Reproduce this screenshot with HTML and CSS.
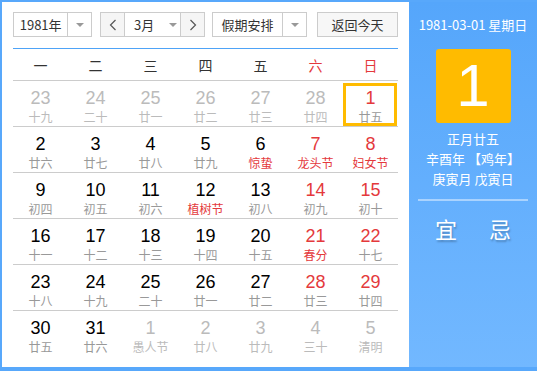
FILE: index.html
```html
<!DOCTYPE html>
<html>
  <head>
    <title>万年历</title>
    <meta charset="UTF-8" />
    <link rel="stylesheet" href="styles.css">
  </head>
  <body>
    <div class="calendar">
      <div class="main">
        <div class="toolbar">
          <div class="select year">
            <span class="sel-text">1981年</span>
            <span class="sel-arrow"><i class="tri"></i></span>
          </div>
          <div class="select month">
            <span class="nav">
              <svg width="8" height="12" viewBox="0 0 8 12"><polyline points="6.5,1 1.5,6 6.5,11" fill="none" stroke="#555" stroke-width="1.2"/></svg>
            </span>
            <span class="sel-text">3月<i class="tri"></i></span>
            <span class="nav">
              <svg width="8" height="12" viewBox="0 0 8 12"><polyline points="1.5,1 6.5,6 1.5,11" fill="none" stroke="#555" stroke-width="1.2"/></svg>
            </span>
          </div>
          <div class="select holiday">
            <span class="sel-text">假期安排</span>
            <span class="sel-arrow"><i class="tri"></i></span>
          </div>
          <button class="today-btn">返回今天</button>
        </div>

        <div class="weekhead">
          <span>一</span><span>二</span><span>三</span><span>四</span><span>五</span>
          <span class="red">六</span><span class="red">日</span>
        </div>

        <div class="days" id="days"></div>
      </div>

      <div class="side">
        <div class="side-date">1981-03-01 星期日</div>
        <div class="big-day">1</div>
        <div class="lunar-info">
          <p>正月廿五</p>
          <p>辛酉年 【鸡年】</p>
          <p>庚寅月 戊寅日</p>
        </div>
        <div class="side-line"></div>
        <div class="yiji"><span>宜</span><span>忌</span></div>
      </div>
    </div>

    <script>
      // [day, lunar, flags]  o = other month, r = red number, f = festival text, t = today
      const weeks = [
        [["23","十九","o"],["24","二十","o"],["25","廿一","o"],["26","廿二","o"],["27","廿三","o"],["28","廿四","o"],["1","廿五","rt"]],
        [["2","廿六"],["3","廿七"],["4","廿八"],["5","廿九"],["6","惊蛰","f"],["7","龙头节","rf"],["8","妇女节","rf"]],
        [["9","初四"],["10","初五"],["11","初六"],["12","植树节","f"],["13","初八"],["14","初九","r"],["15","初十","r"]],
        [["16","十一"],["17","十二"],["18","十三"],["19","十四"],["20","十五"],["21","春分","rf"],["22","十七","r"]],
        [["23","十八"],["24","十九"],["25","二十"],["26","廿一"],["27","廿二"],["28","廿三","r"],["29","廿四","r"]],
        [["30","廿五"],["31","廿六"],["1","愚人节","o"],["2","廿八","o"],["3","廿九","o"],["4","三十","o"],["5","清明","o"]],
      ];

      const days = document.getElementById("days");
      days.innerHTML = weeks
        .map((w) => {
          const cells = w
            .map(([d, l, f = ""]) => {
              let cls = "day";
              if (f.includes("o")) cls += " other";
              if (f.includes("r")) cls += " weekend";
              if (f.includes("f")) cls += " fest";
              if (f.includes("t")) cls += " today";
              return `<div class="${cls}"><span class="num">${d}</span><span class="lunar">${l}</span></div>`;
            })
            .join("");
          return `<div class="week">${cells}</div>`;
        })
        .join("");
    </script>
  </body>
</html>
```

FILE: styles.css
```css
body {
  margin: 0;
  font-family: "Noto Sans CJK SC", "Liberation Sans", sans-serif;
}
.calendar {
  display: flex;
  width: 537px;
  height: 371px;
  box-sizing: border-box;
  padding: 2px 0 4px 2px;
  background: #58a8fb;
}
.main {
  width: 407px;
  background: #fff;
  padding: 10px 11px 0;
  box-sizing: border-box;
}

/* toolbar */
.toolbar {
  display: flex;
  height: 25px;
  font-size: 13px;
  color: #333;
}
.select {
  display: flex;
  border: 1px solid #ccc;
  box-sizing: border-box;
  height: 25px;
  background: #fff;
  white-space: nowrap;
}
.select .sel-text {
  display: flex;
  align-items: center;
  justify-content: center;
}
.sel-arrow {
  width: 23px;
  border-left: 1px solid #ccc;
  display: flex;
  align-items: center;
  justify-content: center;
}
.tri {
  width: 0;
  height: 0;
  border-left: 4px solid transparent;
  border-right: 4px solid transparent;
  border-top: 4px solid #999;
}
.year {
  width: 79px;
}
.year .sel-text {
  width: 54px;
}
.month {
  width: 105px;
  margin-left: 8px;
}
.month .nav {
  width: 23px;
  flex-shrink: 0;
  background: #f5f5f5;
  display: flex;
  align-items: center;
  justify-content: center;
}
.month .nav:first-child {
  border-right: 1px solid #ccc;
}
.month .nav:last-child {
  border-left: 1px solid #ccc;
}
.month .sel-text {
  flex: 1;
  justify-content: flex-start;
  padding-left: 9px;
}
.month .sel-text .tri {
  margin-left: 15px;
}
.holiday {
  width: 95px;
  margin-left: 7px;
}
.holiday .sel-text {
  width: 70px;
}
.today-btn {
  margin-left: 10px;
  width: 81px;
  height: 25px;
  border: 1px solid #ccc;
  background: #f7f7f7;
  font-family: inherit;
  font-size: 13px;
  color: #333;
  padding: 0;
}

/* calendar grid */
.weekhead,
.week {
  display: grid;
  grid-template-columns: repeat(7, 55px);
}
.weekhead {
  margin-top: 11px;
  border-top: 1px solid #4ea3f7;
  border-bottom: 1px solid #ccc;
  height: 33px;
  box-sizing: border-box;
  font-size: 14px;
  color: #333;
}
.weekhead span {
  display: flex;
  align-items: center;
  justify-content: center;
}
.red {
  color: #e4393c;
}
.week {
  height: 46px;
  box-sizing: border-box;
  border-bottom: 1px solid #ccc;
}
.week:last-child {
  border-bottom: none;
}
.day {
  position: relative;
  display: flex;
  flex-direction: column;
  align-items: center;
  padding-top: 6px;
}
.num {
  font-family: "Liberation Sans", sans-serif;
  font-size: 18px;
  line-height: 22px;
  color: #000;
}
.lunar {
  font-size: 12px;
  line-height: 16px;
  color: #999;
}
.weekend .num {
  color: #e4393c;
}
.fest .lunar {
  color: #e4393c;
}
.other .num {
  color: #bbb;
}
.other .lunar {
  color: #bbb;
}
.today::after {
  content: "";
  position: absolute;
  top: 2px;
  left: 0;
  right: 1px;
  bottom: 0;
  border: 3px solid #ffbb00;
}

/* right panel */
.side {
  flex: 1;
  background: linear-gradient(#55a6fb, #72b8ff);
  color: #fff;
  text-align: center;
  display: flex;
  flex-direction: column;
  align-items: center;
}
.side-date {
  margin-top: 15px;
  font-size: 13px;
  line-height: 16px;
}
.big-day {
  margin-top: 16px;
  width: 75px;
  height: 74px;
  border-radius: 3px;
  background: #ffbb00;
  font-family: "Liberation Sans", sans-serif;
  font-size: 60px;
  line-height: 74px;
}
.lunar-info {
  margin-top: 6px;
  font-size: 13px;
}
.lunar-info p {
  margin: 0;
  line-height: 20px;
}
.side-line {
  margin-top: 10px;
  width: 110px;
  height: 2px;
  background: rgba(255, 255, 255, 0.45);
}
.yiji {
  margin-top: 14px;
  display: flex;
  gap: 32px;
  font-size: 22px;
  line-height: 26px;
  text-shadow: 1px 2px 2px rgba(0, 0, 0, 0.25);
}
```
